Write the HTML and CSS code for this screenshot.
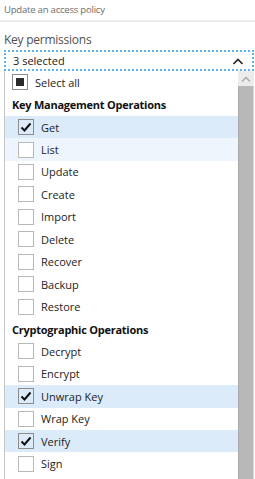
FILE: index.html
```html
<!DOCTYPE html>
<html lang="en">
<head>
    <meta charset="UTF-8">
    <meta name="viewport" content="width=device-width, initial-scale=1.0">
    <title>Key permissions</title>
    <link rel="stylesheet" href="styles.css">
</head>
<body>
    <div class="blade">
        <p class="subtitle">Update an access policy</p>
        <div class="divider"></div>

        <label class="field-label" for="keyPerms">Key permissions</label>
        <div class="dropdown" id="keyPerms">
            <span>3 selected</span>
            <svg class="chevron" width="12" height="8" viewBox="0 0 12 8">
                <polyline points="1.5,7 6,2.5 10.5,7" fill="none" stroke="#222" stroke-width="1.6"/>
            </svg>
        </div>

        <div class="panel">
            <div class="options">
                <div class="option select-all">
                    <span class="box indeterminate"><span></span></span>
                    <span>Select all</span>
                </div>

                <div class="group-title">Key Management Operations</div>
                <div class="option checked">
                    <span class="box"><svg width="14" height="14" viewBox="0 0 14 14"><polyline points="2.5,7.5 5.5,10.5 11.5,3.5" fill="none" stroke="#111" stroke-width="2"/></svg></span>
                    <span>Get</span>
                </div>
                <div class="option hover">
                    <span class="box"></span>
                    <span>List</span>
                </div>
                <div class="option"><span class="box"></span><span>Update</span></div>
                <div class="option"><span class="box"></span><span>Create</span></div>
                <div class="option"><span class="box"></span><span>Import</span></div>
                <div class="option"><span class="box"></span><span>Delete</span></div>
                <div class="option"><span class="box"></span><span>Recover</span></div>
                <div class="option"><span class="box"></span><span>Backup</span></div>
                <div class="option"><span class="box"></span><span>Restore</span></div>

                <div class="group-title">Cryptographic Operations</div>
                <div class="option"><span class="box"></span><span>Decrypt</span></div>
                <div class="option"><span class="box"></span><span>Encrypt</span></div>
                <div class="option checked">
                    <span class="box"><svg width="14" height="14" viewBox="0 0 14 14"><polyline points="2.5,7.5 5.5,10.5 11.5,3.5" fill="none" stroke="#111" stroke-width="2"/></svg></span>
                    <span>Unwrap Key</span>
                </div>
                <div class="option"><span class="box"></span><span>Wrap Key</span></div>
                <div class="option checked">
                    <span class="box"><svg width="14" height="14" viewBox="0 0 14 14"><polyline points="2.5,7.5 5.5,10.5 11.5,3.5" fill="none" stroke="#111" stroke-width="2"/></svg></span>
                    <span>Verify</span>
                </div>
                <div class="option"><span class="box"></span><span>Sign</span></div>
            </div>

            <div class="scrollbar">
                <div class="scroll-up">
                    <svg width="10" height="6" viewBox="0 0 10 6">
                        <polyline points="1,5.5 5,1.5 9,5.5" fill="none" stroke="#a6a6a6" stroke-width="1.3"/>
                    </svg>
                </div>
                <div class="thumb"></div>
            </div>
        </div>
    </div>
</body>
</html>
```

FILE: styles.css
```css
body {
    margin: 0;
    padding: 0;
    font-family: "Open Sans", "Noto Sans", sans-serif;
    color: #222;
    background: #fff;
    overflow: hidden;
}

.blade {
    padding: 0 1px 0 4px;
}

.subtitle {
    margin: 0;
    padding-top: 3px;
    height: 14px;
    font-size: 9.6px;
    line-height: 14px;
    color: #6e6e6e;
    letter-spacing: -0.25px;
}

.divider {
    margin: 3px -1px 0 -4px;
    border-top: 2px solid #ebebeb;
}

.field-label {
    display: block;
    margin-top: 8.5px;
    height: 17px;
    font-size: 12px;
    line-height: 17px;
    color: #505050;
    letter-spacing: -0.25px;
}

.dropdown {
    margin-top: 2.5px;
    height: 17px;
    padding: 0 8px 0 7px;
    display: flex;
    align-items: center;
    justify-content: space-between;
    border: 2px dotted #5cb3ee;
    font-size: 11px;
    color: #222;
}

.chevron {
    display: block;
}

.panel {
    display: flex;
    border-left: 1px solid #c6c6c6;
    height: 420px;
}

.options {
    flex: 1;
}

.option {
    height: 22.45px;
    display: flex;
    align-items: center;
    padding-left: 13px;
    font-size: 11px;
    color: #222;
}

.option.checked {
    background: #dcebfa;
}

.option.hover {
    background: #eef5fd;
}

.option .box {
    width: 14px;
    height: 14px;
    border: 1px solid #b8b8b8;
    background: #fff;
    margin-right: 7px;
    display: flex;
    align-items: center;
    justify-content: center;
    flex-shrink: 0;
}

.option.checked .box {
    border-color: #8c8c8c;
    background: transparent;
}

.option.select-all {
    padding-left: 7px;
}

.box.indeterminate {
    border-color: #8c8c8c;
}

.box.indeterminate span {
    width: 8px;
    height: 8px;
    background: #2b2b2b;
}

.group-title {
    height: 22.45px;
    display: flex;
    align-items: center;
    padding-left: 7px;
    font-size: 11px;
    font-weight: 700;
    letter-spacing: -0.25px;
    color: #111;
}

.scrollbar {
    width: 16px;
    display: flex;
    flex-direction: column;
    background: #f0f0f0;
}

.scroll-up {
    height: 15px;
    display: flex;
    align-items: center;
    justify-content: center;
    background: #ececec;
}

.thumb {
    flex: 1;
    background: #b8b8b8;
    border-left: 1px solid #a9a9a9;
    border-right: 1px solid #d6d6d6;
}
```
